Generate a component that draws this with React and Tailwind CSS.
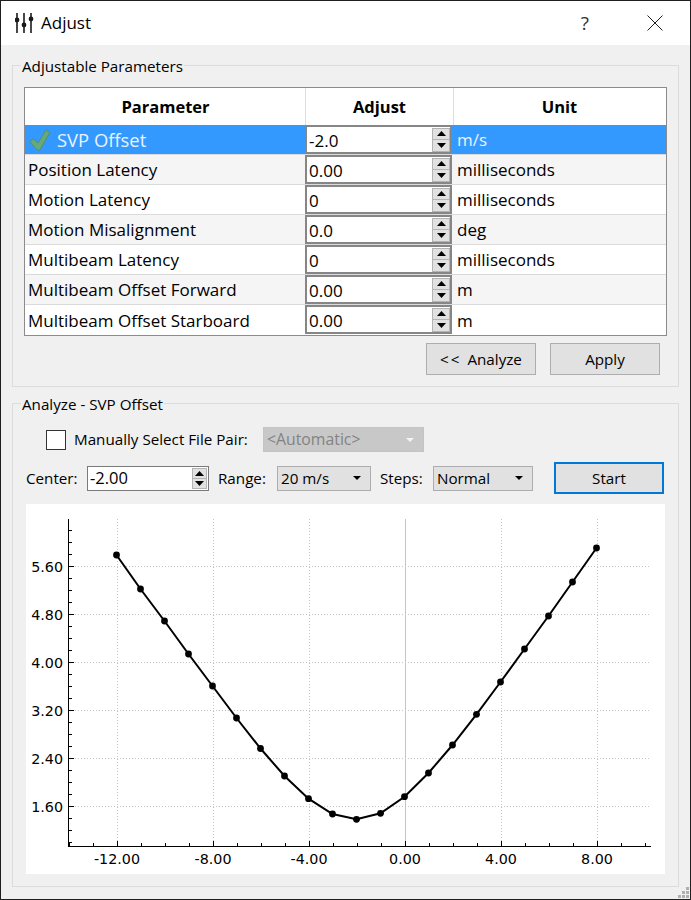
import React from "react"

const rows = [
  { name: "SVP Offset", value: "-2.0", unit: "m/s", selected: true },
  { name: "Position Latency", value: "0.00", unit: "milliseconds" },
  { name: "Motion Latency", value: "0", unit: "milliseconds" },
  { name: "Motion Misalignment", value: "0.0", unit: "deg" },
  { name: "Multibeam Latency", value: "0", unit: "milliseconds" },
  { name: "Multibeam Offset Forward", value: "0.00", unit: "m" },
  { name: "Multibeam Offset Starboard", value: "0.00", unit: "m" },
]

// pixel y of every sample, from x = -12 to 8
const curve = [555, 589, 621, 654, 686, 718, 748.5, 776, 798.7, 814, 819.3, 813.3, 796.7, 773, 745, 714.3, 682, 649, 616, 582, 548]

function Arrow({ up }) {
  return (
    <svg width="9" height="5" viewBox="0 0 9 5">
      <path d={up ? "M4.5 0 L9 5 L0 5 Z" : "M0 0 L9 0 L4.5 5 Z"} fill="#000" />
    </svg>
  )
}

function SpinButtons({ className }) {
  return (
    <div className={"flex flex-col gap-0 shrink-0 " + className}>
      <div className="flex-1 flex items-center justify-center bg-[#e1e1e1] border border-[#b4b4b4]"><Arrow up /></div>
      <div className="flex-1 flex items-center justify-center bg-[#e1e1e1] border border-[#b4b4b4] border-t-0"><Arrow /></div>
    </div>
  )
}

function CellSpin({ value }) {
  return (
    <div className="h-[29px] w-[147px] bg-white border-2 border-[#868686] flex items-center justify-between pl-[2px] text-black">
      <span className="leading-none text-[17px] pt-px">{value}</span>
      <SpinButtons className="w-[18px] h-[24px]" />
    </div>
  )
}

function Combo({ width, text, disabled }) {
  return (
    <div className={"h-[25px] flex items-center justify-between pl-[3px] pr-[9px] border " + width + " " + (disabled ? "bg-[#c8c8c8] border-[#c4c4c4] text-[#838383] text-[15.8px]" : "bg-[#e1e1e1] border-[#adadad] text-black")}>
      <span>{text}</span>
      <svg width="8" height="4" viewBox="0 0 8 4">
        <path d="M0 0 L8 0 L4 4 Z" fill={disabled ? "#f4f4f4" : "#000"} />
      </svg>
    </div>
  )
}

function Button({ children, width, focused }) {
  return (
    <div className={"flex items-center justify-center bg-[#e1e1e1] " + width + " " + (focused ? "h-[32px] border-2 border-[#0078d7]" : "h-[32px] border border-[#adadad]")}>
      {children}
    </div>
  )
}

function Plot() {
  const X0 = 405
  const Y0 = 806.5
  const xTicks = []
  for (let i = -14; i <= 10; i++) xTicks.push({ x: X0 + i * 24 + 0.5, major: i % 4 === 0 })
  const yTicks = []
  for (let i = -3; i <= 24; i++) yTicks.push({ y: Y0 - i * 12, major: i % 4 === 0 })
  const xLabels = [-12, -8, -4, 0, 4, 8]
  const yLabels = [1.6, 2.4, 3.2, 4.0, 4.8, 5.6]

  const ox = 26
  const oy = 504
  const pts = curve.map((y, i) => [116.5 + i * 24 - ox, y - oy])

  return (
    <svg width="639" height="370" viewBox="0 0 639 370" className="block bg-white">
      {xLabels.map((v) => (
        v === 0
          ? <line key={v} x1={X0 + 0.5 - ox} x2={X0 + 0.5 - ox} y1={15} y2={342} stroke="#c4c4c4" />
          : <line key={v} x1={X0 + v * 24 + 0.5 - ox} x2={X0 + v * 24 + 0.5 - ox} y1={15} y2={342} stroke="#c4c4c4" strokeDasharray="1 2" />
      ))}
      {yLabels.map((v) => {
        const y = Y0 - ((v - 1.6) / 0.8) * 48 - oy
        return <line key={v} x1={43} x2={623} y1={y} y2={y} stroke="#c4c4c4" strokeDasharray="1 2" />
      })}
      <polyline points={pts.map((p) => p.join(",")).join(" ")} fill="none" stroke="#000" strokeWidth="2" />
      {pts.map((p, i) => <circle key={i} cx={p[0]} cy={p[1]} r="3.4" fill="#000" />)}
      <line x1={42.5} x2={42.5} y1={15} y2={343} stroke="#000" />
      <line x1={42} x2={625} y1={342.5} y2={342.5} stroke="#000" />
      {xTicks.filter((t) => t.x - ox > 43 && t.x - ox < 625).map((t) => (
        <line key={t.x} x1={t.x - ox} x2={t.x - ox} y1={342} y2={t.major ? 337 : 339} stroke="#000" />
      ))}
      {yTicks.filter((t) => t.y - oy < 342 && t.y - oy > 15).map((t) => (
        <line key={t.y} x1={43} x2={t.major ? 48 : 46} y1={t.y - oy} y2={t.y - oy} stroke="#000" />
      ))}
      <g fontFamily="'DejaVu Sans', sans-serif" fontSize="14.3" fill="#000">
        {yLabels.map((v) => (
          <text key={v} x={37} y={Y0 - ((v - 1.6) / 0.8) * 48 - oy + 5} textAnchor="end">{v.toFixed(2)}</text>
        ))}
        {xLabels.map((v) => (
          <text key={v} x={X0 + v * 24 - ox} y={360} textAnchor="middle">{v.toFixed(2)}</text>
        ))}
      </g>
    </svg>
  )
}

export default function App() {
  return (
    <div className="w-[691px] h-[900px] bg-[#f0f0f0] border border-[#1f1f1f] font-['Open_Sans',sans-serif] text-[15.2px] text-black overflow-hidden flex flex-col">
      {/* title bar */}
      <div className="h-[44px] shrink-0 bg-white flex items-center pl-[14px] pr-[27px]">
        <svg width="19" height="22" viewBox="0 0 19 22" className="shrink-0">
          <g stroke="#1a1a1a" strokeWidth="1.6" fill="#1a1a1a">
            <line x1="2" y1="1" x2="2" y2="21" />
            <line x1="9" y1="1" x2="9" y2="21" />
            <line x1="16" y1="1" x2="16" y2="21" />
            <circle cx="2" cy="8" r="1.6" />
            <circle cx="9" cy="13" r="1.6" />
            <circle cx="16" cy="7" r="1.6" />
          </g>
        </svg>
        <span className="ml-[7px] text-[17px]">Adjust</span>
        <span className="ml-auto text-[19px] text-[#333] mr-[58px]">?</span>
        <svg width="16" height="16" viewBox="0 0 16 16">
          <path d="M0.5 0.5 L15.5 15.5 M15.5 0.5 L0.5 15.5" stroke="#222" strokeWidth="1" fill="none" />
        </svg>
      </div>

      <div className="flex-1 px-[11px] pt-[9px] relative">
        <fieldset className="border border-[#dcdcdc] h-[333px] w-[667px] pl-[11px]">
          <legend className="-ml-[3px] px-px leading-[24px] h-[22px]">Adjustable Parameters</legend>

          <div className="mt-[11px] w-[643px] border border-[#8b8b8b] bg-white text-[17px]">
            <div className="grid grid-cols-[280px_148px_1fr] h-[37px] font-bold border-l border-r border-white text-[16.5px]">
              <div className="flex items-center justify-center border-r border-[#dedede] pt-[2px]">Parameter</div>
              <div className="flex items-center justify-center border-r border-[#dedede] pt-[2px]">Adjust</div>
              <div className="flex items-center justify-center pt-[2px]">Unit</div>
            </div>
            {rows.map((r, i) => (
              <div
                key={r.name}
                className={"grid grid-cols-[280px_148px_1fr] h-[30px] border-b border-[#dadada] last:border-b-0 " + (r.selected ? "bg-[#3399ff] text-white" : i % 2 === 1 ? "bg-[#f5f5f5]" : "bg-white")}
              >
                <div className="flex items-center pl-[3px]">
                  {r.selected && (
                    <svg width="24" height="24" viewBox="0 0 24 24" className="mr-[5px] shrink-0">
                      <path d="M2 14 L5 10.5 L10 15 L18 2 L22 4 L12 22 L9 22 Z" fill="#66a97a" stroke="#558f69" strokeWidth="1" strokeLinejoin="round" />
                    </svg>
                  )}
                  <span className={"pt-px " + (r.selected ? "text-[#e8f3ff] text-[18.4px]" : "")}>{r.name}</span>
                </div>
                <div className="flex items-start"><CellSpin value={r.value} /></div>
                <div className={"flex items-center pl-[4px] pt-px " + (r.selected ? "text-[#e8f3ff]" : "")}>{r.unit}</div>
              </div>
            ))}
          </div>

          <div className="mt-[7px] flex justify-end gap-[14px] pr-[18px]">
            <Button width="w-[110px]"><span className="tracking-[2px] mr-[6px]">{"<<"}</span>Analyze</Button>
            <Button width="w-[110px]">Apply</Button>
          </div>
        </fieldset>

        <fieldset className="mt-[5px] border border-[#dcdcdc] h-[495px] w-[667px] pl-[13px]">
          <legend className="-ml-[5px] px-px leading-[24px] h-[22px]">Analyze - SVP Offset</legend>

          <div className="mt-[13px] flex items-center h-[25px] pl-[20px]">
            <div className="w-[20px] h-[20px] bg-white border border-[#333]" />
            <span className="ml-[8px] w-[189px]">Manually Select File Pair:</span>
            <Combo width="w-[161px]" text="<Automatic>" disabled />
          </div>

          <div className="mt-[10px] flex items-center h-[32px]">
            <span className="w-[61px]">Center:</span>
            <div className="w-[122px] h-[25px] bg-white border border-[#7a7a7a] flex items-center justify-between pl-[2px] pr-[1px]">
              <span className="text-[16.5px]">-2.00</span>
              <SpinButtons className="w-[15px] h-[21px]" />
            </div>
            <span className="ml-[9px] w-[59px]">Range:</span>
            <Combo width="w-[94px]" text="20 m/s" />
            <span className="ml-[9px] w-[53px]">Steps:</span>
            <Combo width="w-[100px]" text="Normal" />
            <div className="ml-[21px]"><Button width="w-[110px]" focused>Start</Button></div>
          </div>

          <div className="mt-[10px]">
            <Plot />
          </div>
        </fieldset>

        {/* size grip */}
        <svg width="13" height="13" viewBox="0 0 13 13" className="absolute right-0 bottom-0">
          <g fill="#b0b0b0">
            <rect x="9" y="1" width="3" height="3" />
            <rect x="5" y="5" width="3" height="3" />
            <rect x="9" y="5" width="3" height="3" />
            <rect x="1" y="9" width="3" height="3" />
            <rect x="5" y="9" width="3" height="3" />
            <rect x="9" y="9" width="3" height="3" />
          </g>
        </svg>
      </div>
    </div>
  )
}
